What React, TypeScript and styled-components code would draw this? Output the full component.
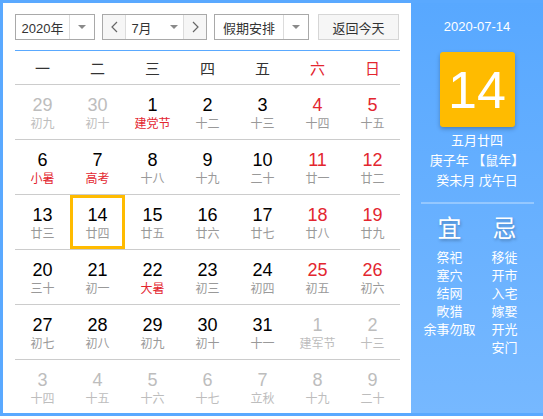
import React from 'react';
import styled, { createGlobalStyle } from 'styled-components';

const GlobalStyle = createGlobalStyle`
  html, body {
    margin: 0;
    padding: 0;
    background: #fff;
  }
  body {
    font-family: "Liberation Sans", "Noto Sans CJK SC", sans-serif;
  }
`;

type DayKind = 'normal' | 'weekend' | 'off';

interface Day {
  num: number;
  lunar: string;
  kind?: DayKind;
  festival?: boolean;
  today?: boolean;
}

const weekdays = ['一', '二', '三', '四', '五', '六', '日'];

const d = (num: number, lunar: string, kind: DayKind = 'normal', festival = false, today = false): Day => ({
  num,
  lunar,
  kind,
  festival,
  today,
});

const weeks: Day[][] = [
  [d(29, '初九', 'off'), d(30, '初十', 'off'), d(1, '建党节', 'normal', true), d(2, '十二'), d(3, '十三'), d(4, '十四', 'weekend'), d(5, '十五', 'weekend')],
  [d(6, '小暑', 'normal', true), d(7, '高考', 'normal', true), d(8, '十八'), d(9, '十九'), d(10, '二十'), d(11, '廿一', 'weekend'), d(12, '廿二', 'weekend')],
  [d(13, '廿三'), d(14, '廿四', 'normal', false, true), d(15, '廿五'), d(16, '廿六'), d(17, '廿七'), d(18, '廿八', 'weekend'), d(19, '廿九', 'weekend')],
  [d(20, '三十'), d(21, '初一'), d(22, '大暑', 'normal', true), d(23, '初三'), d(24, '初四'), d(25, '初五', 'weekend'), d(26, '初六', 'weekend')],
  [d(27, '初七'), d(28, '初八'), d(29, '初九'), d(30, '初十'), d(31, '十一'), d(1, '建军节', 'off'), d(2, '十三', 'off')],
  [d(3, '十四', 'off'), d(4, '十五', 'off'), d(5, '十六', 'off'), d(6, '十七', 'off'), d(7, '立秋', 'off'), d(8, '十九', 'off'), d(9, '二十', 'off')],
];

const yi = ['祭祀', '塞穴', '结网', '畋猎', '余事勿取'];
const ji = ['移徙', '开市', '入宅', '嫁娶', '开光', '安门'];

const RED = '#e3262f';

const Widget = styled.div`
  box-sizing: border-box;
  width: 543px;
  height: 416px;
  border: 3px solid #5aa9ff;
  border-right: none;
  display: flex;
`;

const Main = styled.div`
  width: 408px;
  box-sizing: border-box;
  padding: 11px 11px 0 12px;
  background: #fff;
`;

const Toolbar = styled.div`
  display: flex;
  align-items: stretch;
  height: 26px;
  padding-bottom: 10px;
  border-bottom: 1px solid #5aa9ff;
  font-size: 13px;
  color: #333;
`;

const Select = styled.div<{ $width: number; $gap: number }>`
  box-sizing: border-box;
  width: ${(p) => p.$width}px;
  margin-right: ${(p) => p.$gap}px;
  border: 1px solid #a9a9a9;
  display: flex;
  background: #fff;
`;

const SelectText = styled.div`
  flex: 1;
  display: flex;
  align-items: center;
  justify-content: center;
`;

const ArrowBox = styled.div`
  width: 24px;
  border-left: 1px solid #dcdcdc;
  display: flex;
  align-items: center;
  justify-content: center;
`;

const Caret = styled.span`
  width: 0;
  height: 0;
  border-left: 4px solid transparent;
  border-right: 4px solid transparent;
  border-top: 4px solid #8a8a8a;
`;

const InlineCaret = styled(Caret)`
  margin-left: 18px;
`;

const StepButton = styled.div<{ $side: 'left' | 'right' }>`
  width: 22px;
  background: #f6f6f6;
  display: flex;
  align-items: center;
  justify-content: center;
  ${(p) => (p.$side === 'left' ? 'border-right' : 'border-left')}: 1px solid #dcdcdc;
`;

const TodayButton = styled.div`
  box-sizing: border-box;
  width: 81px;
  border: 1px solid #d6d6d6;
  background: #f6f6f6;
  display: flex;
  align-items: center;
  justify-content: center;
`;

const Grid = styled.div`
  display: grid;
  grid-template-columns: repeat(7, 1fr);
`;

const HeadRow = styled(Grid)`
  height: 33px;
  border-bottom: 1px solid #cccccc;
`;

const HeadCell = styled.div<{ $weekend: boolean }>`
  display: flex;
  align-items: center;
  justify-content: center;
  font-size: 15px;
  color: ${(p) => (p.$weekend ? RED : '#333')};
`;

const WeekRow = styled(Grid)<{ $last: boolean }>`
  height: 55px;
  box-sizing: border-box;
  border-bottom: ${(p) => (p.$last ? 'none' : '1px solid #cccccc')};
`;

const Cell = styled.div<{ $today: boolean }>`
  box-sizing: border-box;
  height: 54px;
  padding-top: 10px;
  text-align: center;
  box-shadow: ${(p) => (p.$today ? 'inset 0 0 0 3px #ffbb00' : 'none')};
`;

const Num = styled.div<{ $kind: DayKind }>`
  font-size: 18px;
  line-height: 20px;
  color: ${(p) => (p.$kind === 'off' ? '#bdbdbd' : p.$kind === 'weekend' ? RED : '#000')};
`;

const Lunar = styled.div<{ $off: boolean; $festival: boolean }>`
  font-size: 12px;
  line-height: 16px;
  margin-top: 1px;
  color: ${(p) => (p.$off ? '#bdbdbd' : p.$festival ? RED : '#999')};
`;

const Side = styled.div`
  flex: 1;
  background: linear-gradient(#58a8ff, #76b8ff);
  color: #fff;
  display: flex;
  flex-direction: column;
  align-items: center;
  padding-top: 15px;
  font-size: 13px;
`;

const DateLine = styled.div`
  line-height: 18px;
`;

const BigDay = styled.div`
  margin-top: 16px;
  width: 75px;
  height: 75px;
  border-radius: 3px;
  background: #ffbb00;
  box-shadow: 0 2px 4px rgba(0, 0, 0, 0.25);
  display: flex;
  align-items: center;
  justify-content: center;
  font-size: 52px;
`;

const LunarInfo = styled.div`
  margin-top: 4px;
  line-height: 20px;
  text-align: center;
`;

const Divider = styled.div`
  align-self: stretch;
  margin: 11px 9px 0 10px;
  height: 2px;
  background: rgba(255, 255, 255, 0.3);
`;

const Columns = styled.div`
  margin-top: 10px;
  display: flex;
`;

const Column = styled.div`
  width: 55px;
  display: flex;
  flex-direction: column;
  align-items: center;
`;

const BigWord = styled.div`
  font-size: 24px;
  line-height: 30px;
  margin-bottom: 5px;
  text-shadow: 1px 2px 3px rgba(0, 0, 0, 0.25);
`;

const Item = styled.div`
  line-height: 18px;
  white-space: nowrap;
`;

const Chevron: React.FC<{ dir: 'left' | 'right' }> = ({ dir }) => (
  <svg width="7" height="12" viewBox="0 0 7 12">
    <polyline
      points={dir === 'left' ? '6,1 1,6 6,11' : '1,1 6,6 1,11'}
      fill="none"
      stroke="#666"
      strokeWidth="1.2"
    />
  </svg>
);

const App: React.FC = () => {
  return (
    <>
      <GlobalStyle />
      <Widget>
        <Main>
          <Toolbar>
            <Select $width={80} $gap={7}>
              <SelectText>2020年</SelectText>
              <ArrowBox>
                <Caret />
              </ArrowBox>
            </Select>
            <Select $width={105} $gap={7}>
              <StepButton $side="left">
                <Chevron dir="left" />
              </StepButton>
              <SelectText>
                7月
                <InlineCaret />
              </SelectText>
              <StepButton $side="right">
                <Chevron dir="right" />
              </StepButton>
            </Select>
            <Select $width={95} $gap={9}>
              <SelectText>假期安排</SelectText>
              <ArrowBox>
                <Caret />
              </ArrowBox>
            </Select>
            <TodayButton>返回今天</TodayButton>
          </Toolbar>
          <HeadRow>
            {weekdays.map((w, i) => (
              <HeadCell key={w} $weekend={i >= 5}>
                {w}
              </HeadCell>
            ))}
          </HeadRow>
          {weeks.map((week, wi) => (
            <WeekRow key={wi} $last={wi === weeks.length - 1}>
              {week.map((day, di) => (
                <Cell key={di} $today={!!day.today}>
                  <Num $kind={day.kind || 'normal'}>{day.num}</Num>
                  <Lunar $off={day.kind === 'off'} $festival={!!day.festival}>
                    {day.lunar}
                  </Lunar>
                </Cell>
              ))}
            </WeekRow>
          ))}
        </Main>
        <Side>
          <DateLine>2020-07-14</DateLine>
          <BigDay>14</BigDay>
          <LunarInfo>
            <div>五月廿四</div>
            <div>庚子年 【鼠年】</div>
            <div>癸未月 戊午日</div>
          </LunarInfo>
          <Divider />
          <Columns>
            <Column>
              <BigWord>宜</BigWord>
              {yi.map((t) => (
                <Item key={t}>{t}</Item>
              ))}
            </Column>
            <Column>
              <BigWord>忌</BigWord>
              {ji.map((t) => (
                <Item key={t}>{t}</Item>
              ))}
            </Column>
          </Columns>
        </Side>
      </Widget>
    </>
  );
};

export default App;
